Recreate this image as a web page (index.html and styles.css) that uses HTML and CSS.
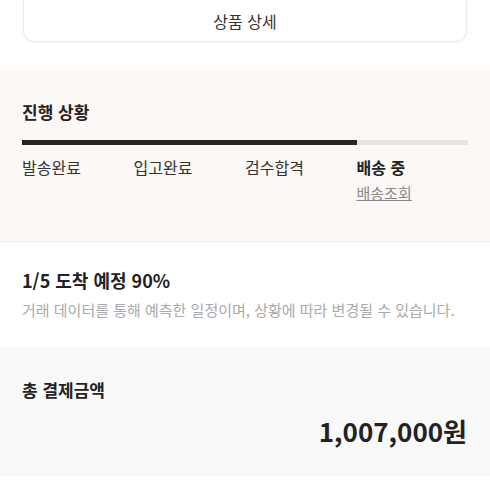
FILE: index.html
```html
<!DOCTYPE html>
<html lang="ko">
<head>
<meta charset="utf-8">
<link rel="stylesheet" href="styles.css">
</head>
<body>
<div class="top">
  <button class="detail-btn">상품 상세</button>
</div>
<section class="progress">
  <h2 class="title">진행 상황</h2>
  <div class="bar"><div class="bar-fill" style="width:75%"></div></div>
  <div class="steps">
    <div class="step">발송완료</div>
    <div class="step">입고완료</div>
    <div class="step">검수합격</div>
    <div class="step current">배송 중<a class="track">배송조회</a></div>
  </div>
</section>
<section class="eta">
  <h3 class="eta-title">1/5 도착 예정 90%</h3>
  <p class="eta-desc">거래 데이터를 통해 예측한 일정이며, 상황에 따라 변경될 수 있습니다.</p>
</section>
<section class="total">
  <div class="total-label">총 결제금액</div>
  <div class="total-amount">1,007,000원</div>
</section>
</body>
</html>
```
FILE: styles.css
```css
* { box-sizing: border-box; margin: 0; padding: 0; }
body {
  font-family: "Noto Sans CJK KR", "Noto Sans", sans-serif;
  background: #fff;
  color: #222;
  width: 490px;
  height: 490px;
  overflow: hidden;
}
.top {
  padding: 0 23px;
  height: 70px;
}
.detail-btn {
  display: block;
  width: 100%;
  height: 42px;
  border: 1px solid #ebebeb;
  border-top: none;
  border-radius: 0 0 12px 12px;
  background: #fff;
  box-shadow: 0 1px 3px rgba(0,0,0,0.05);
  font-family: inherit;
  font-size: 16px;
  color: #333;
  line-height: 38px;
}
.progress {
  background: #fcf8f6;
  padding: 29px 22px 0;
  height: 172px;
  border-bottom: 1px solid #efecea;
}
.title {
  font-size: 17px;
  font-weight: 700;
  line-height: 26px;
  color: #222;
}
.bar {
  margin-top: 15px;
  height: 5px;
  background: #e6e3e2;
  width: 446px;
  border-radius: 1px;
}
.bar-fill {
  height: 100%;
  background: #2a2322;
}
.steps {
  display: grid;
  grid-template-columns: repeat(4, 1fr);
  margin-top: 10px;
  width: 446px;
}
.step {
  font-size: 16px;
  line-height: 24px;
  color: #333;
}
.step.current {
  font-weight: 700;
  color: #222;
  display: flex;
  flex-direction: column;
  align-items: flex-start;
}
.track {
  font-weight: 400;
  font-size: 15px;
  line-height: 22px;
  color: #888;
  text-decoration: underline;
  margin-top: 3px;
}
.eta {
  padding: 25px 22px 0;
  height: 105px;
}
.eta-title {
  font-size: 18px;
  font-weight: 700;
  line-height: 26px;
  color: #222;
}
.eta-desc {
  margin-top: 6px;
  font-size: 15px;
  line-height: 22px;
  color: #aaa;
}
.total {
  background: #f9f9f9;
  padding: 31px 22px 0;
  height: 129px;
}
.total-label {
  font-size: 17px;
  font-weight: 700;
  line-height: 24px;
  color: #222;
}
.total-amount {
  text-align: right;
  margin-top: 13px;
  font-size: 26px;
  font-weight: 700;
  line-height: 32px;
  color: #222;
  padding-right: 1px;
}
```
